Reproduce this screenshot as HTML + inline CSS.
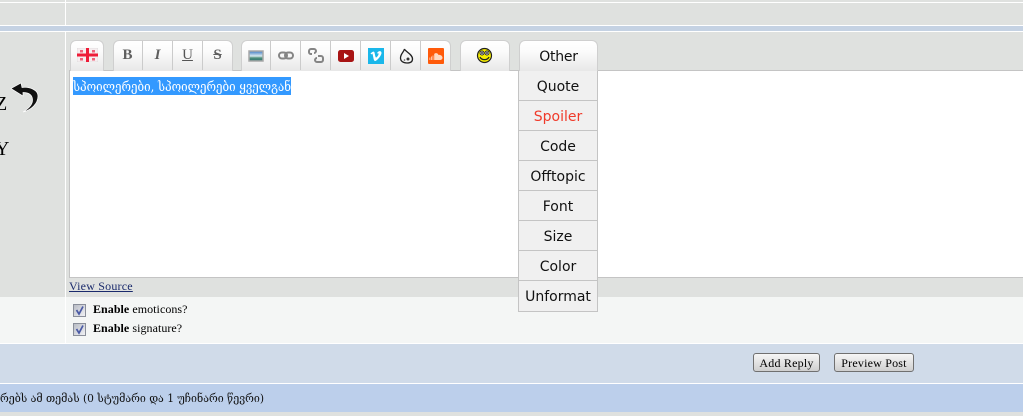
<!DOCTYPE html>
<html><head><meta charset="utf-8">
<style>
html,body{margin:0;padding:0;width:1023px;height:416px;overflow:hidden;background:#dfe1df}
.a{position:absolute}
body{font-family:"Liberation Serif","DejaVu Serif",serif;color:#000}
.g{position:absolute;top:40px;height:30px;border:1px solid #cfcfcf;border-bottom:0;border-radius:6px 6px 0 0;background:linear-gradient(#fff,#fbfbfb 35%,#e8e8e8);box-sizing:content-box}
.d{position:absolute;top:41px;width:1px;height:29px;background:#cbcbcb}
.t{position:absolute;top:47px;font:bold 15px "Liberation Serif",serif;color:#5f5f5f;text-align:center;width:29px}
.m{position:absolute;left:518px;width:78px;height:29px;background:#f0f0f0;border:1px solid #c4c4c4;border-top:0;box-sizing:content-box;text-align:center;font:14px/33px "DejaVu Sans","Liberation Sans",sans-serif;color:#111}
.cb{position:absolute;left:73px;width:11px;height:11px;border:1px solid #8a8f9a;background:linear-gradient(135deg,#b9bdc6,#f0f1f4)}
.btn{position:absolute;top:353px;height:17px;border:1px solid #707070;border-radius:3px;background:linear-gradient(#f6f6f6,#cfcfcf);font:12px/18px "Liberation Serif",serif;text-align:center;color:#000;letter-spacing:.2px}
</style></head><body>

<div class="a" style="left:0;top:2px;width:1023px;height:1px;background:#fff"></div>
<div class="a" style="left:0;top:25px;width:1023px;height:1px;background:#fff"></div>
<div class="a" style="left:0;top:26px;width:1023px;height:5px;background:#c5d2e3"></div>
<div class="a" style="left:0;top:31px;width:1023px;height:1px;background:#fff"></div>
<div class="a" style="left:65px;top:0;width:1px;height:25px;background:#fff"></div>
<div class="a" style="left:65px;top:32px;width:1px;height:265px;background:#fff"></div>

<!-- left cell -->
<div class="a" style="left:-5px;top:92px;font:20px/24px 'Liberation Serif',serif;color:#000">Z</div>
<div class="a" style="left:-5px;top:137px;font:20px/24px 'Liberation Serif',serif;color:#000">Y</div>
<svg class="a" style="left:10px;top:80px" width="30" height="34" viewBox="0 0 30 34">
<path d="M11 3 L1 8.500 L13 16 L13 12.500 C19 12.500 23 15 22.500 21 C22 25 18 29 13 32 C21 30 28 24 28 16 C28 10 20 6.500 12 7.500 Z" fill="#111" stroke="#fff" stroke-width=".7"/>
</svg>

<!-- editor -->
<div class="a" style="left:69px;top:70px;width:954px;height:208px;background:#fff;border-top:1px solid #c4c4c4;border-bottom:1px solid #c4c4c4;border-left:1px solid #c4c4c4;box-sizing:border-box"></div>

<!-- selection -->
<div class="a" style="left:73px;top:77px;width:218px;height:18px;background:#3399ff"></div>
<svg class="a" style="left:73px;top:77px" width="218" height="18">
<text x="0" y="14" textLength="218" lengthAdjust="spacingAndGlyphs" font-family="'DejaVu Serif','DejaVu Sans',serif" font-size="13" fill="#fff">სპოილერები, სპოილერები ყველგან</text>
</svg>

<!-- toolbar -->
<div class="g" style="left:70px;width:32px"></div>
<svg class="a" style="left:77px;top:48px" width="21" height="14" viewBox="0 0 21 14">
<rect width="21" height="14" fill="#f6eef0" stroke="#d4d4d4" stroke-width=".6"/>
<rect x="9" width="3" height="14" fill="#ee1c38"/><rect y="5.500" width="21" height="3" fill="#ee1c38"/>
<g fill="#f06078"><rect x="3" y="2" width="3" height="2.500"/><rect x="15" y="2" width="3" height="2.500"/><rect x="3" y="10" width="3" height="2.500"/><rect x="15" y="10" width="3" height="2.500"/></g>
</svg>

<div class="g" style="left:113px;width:118px"></div>
<div class="d" style="left:142px"></div><div class="d" style="left:172px"></div><div class="d" style="left:202px"></div>
<div class="t" style="left:113px">B</div>
<div class="t" style="left:143px;font-style:italic">I</div>
<div class="t" style="left:173px;text-decoration:underline;font-weight:normal;color:#555">U</div>
<div class="t" style="left:203px;text-decoration:line-through">S</div>

<div class="g" style="left:241px;width:208px"></div>
<div class="d" style="left:270px"></div><div class="d" style="left:300px"></div><div class="d" style="left:330px"></div><div class="d" style="left:360px"></div><div class="d" style="left:390px"></div><div class="d" style="left:420px"></div>

<svg class="a" style="left:248px;top:50px" width="16" height="12" viewBox="0 0 16 12">
<defs><linearGradient id="s" x1="0" y1="0" x2="0" y2="1"><stop offset="0" stop-color="#3b79c4"/><stop offset=".5" stop-color="#d7e8ee"/><stop offset=".7" stop-color="#4d8f7c"/><stop offset="1" stop-color="#2f6f70"/></linearGradient></defs>
<rect x="1" y="1" width="14" height="10" fill="url(#s)" stroke="#a8a8a8" stroke-width="1.500"/></svg>

<svg class="a" style="left:278px;top:51px" width="16" height="9" viewBox="0 0 16 9">
<rect x="1" y="1.500" width="8" height="6" rx="3" fill="none" stroke="#858585" stroke-width="2"/>
<rect x="7" y="1.500" width="8" height="6" rx="3" fill="none" stroke="#858585" stroke-width="2"/></svg>

<svg class="a" style="left:308px;top:48px" width="16" height="15" viewBox="0 0 16 15">
<path d="M4 6H2.500C1.500 6 1 5 1 4V3C1 2 1.800 1 3 1H6C7.200 1 8 2 8 3C8 4 7.200 5 6 5" fill="none" stroke="#858585" stroke-width="2"/>
<path d="M10 8H13C14.200 8 15 9 15 10V12C15 13 14.200 14 13 14H9C7.800 14 7 13 7 12C7 11 7.800 10 9 10" fill="none" stroke="#858585" stroke-width="2"/></svg>

<svg class="a" style="left:338px;top:50px" width="16" height="12" viewBox="0 0 16 12">
<rect width="16" height="12" rx="2.500" fill="#a81414"/><path d="M6 3L11 6L6 9Z" fill="#fff"/></svg>

<svg class="a" style="left:368px;top:48px" width="16" height="16" viewBox="0 0 16 16">
<rect width="16" height="16" fill="#1ab7ea"/>
<path d="M2.500 5.500C4.500 3.500 6 3 6.500 4.500C7 6.500 7.300 9 8 9.500C9 9.500 11 6.500 10.500 5.500C10 5 9.300 5.300 9 5.700C9.300 3 13.500 1.800 13.500 5C13.500 7.500 9 13 7 13C5.500 13 5.300 8 4.500 6C4.200 5.500 3.700 6 3.500 6.500Z" fill="#fff"/></svg>

<svg class="a" style="left:399px;top:48px" width="15" height="16" viewBox="0 0 15 16">
<path d="M5.500 1C6 3.500 13.500 6 13.500 11C13.500 13.500 11.500 15 8 15C4 15 1.500 13 1.500 10C1.500 6 4.500 4.500 5.500 1Z" fill="#f4f4f4" stroke="#222" stroke-width="1.300"/>
<circle cx="9" cy="11" r="1.500" fill="#333"/><circle cx="5.500" cy="12" r=".8" fill="#555"/></svg>

<svg class="a" style="left:428px;top:48px" width="16" height="16" viewBox="0 0 16 16">
<rect width="16" height="16" rx="1" fill="#ff5a0a"/>
<path d="M1.500 12V9.500H2.300V12ZM3 12V8.500H3.800V12ZM4.600 12V7.500H5.400V12ZM6.200 12V6C7.200 4.500 10 4.800 10.500 7C12.300 6.500 14.500 7.800 14.500 9.800C14.500 11 13.500 12 12.500 12Z" fill="#ffd9c2"/></svg>

<div class="g" style="left:460px;width:48px"></div>
<svg class="a" style="left:476px;top:47px" width="17" height="17" viewBox="0 0 17 17">
<circle cx="8.500" cy="8.500" r="7" fill="#f7ee00" stroke="#222" stroke-width="1.200"/>
<circle cx="6" cy="6" r="2" fill="#fff" stroke="#222" stroke-width=".9"/><circle cx="11" cy="6" r="2" fill="#fff" stroke="#222" stroke-width=".9"/>
<circle cx="6" cy="6" r=".9" fill="#000"/><circle cx="11" cy="6" r=".9" fill="#000"/>
<path d="M4 10C5.500 13.500 11.500 13.500 13 10" fill="none" stroke="#222" stroke-width="1.300"/></svg>

<div class="g" style="left:519px;width:77px;text-align:center;font:14px/33px 'DejaVu Sans','Liberation Sans',sans-serif;color:#111;letter-spacing:-.25px">Other</div>

<!-- view source -->
<div class="a" style="left:69px;top:279px;font:12px/15px 'Liberation Serif',serif;color:#1a2a6c;text-decoration:underline;letter-spacing:.2px">View Source</div>

<!-- options row -->
<div class="a" style="left:0;top:297px;width:1023px;height:46px;background:#f4f6f5"></div>
<div class="a" style="left:65px;top:297px;width:1px;height:46px;background:#fff"></div>
<div class="cb" style="top:304px"></div>
<div class="cb" style="top:323px"></div>
<svg class="a" style="left:73px;top:304px" width="13" height="32" viewBox="0 0 13 32">
<path d="M3.500 6L6 10L10 2.500" fill="none" stroke="#4a5aa5" stroke-width="1.700"/>
<path d="M3.500 25L6 29L10 21.500" fill="none" stroke="#4a5aa5" stroke-width="1.700"/></svg>
<div class="a" style="left:93px;top:302px;font:12px/15px 'Liberation Serif',serif;letter-spacing:.05px"><b>Enable</b> emoticons?</div>
<div class="a" style="left:93px;top:321px;font:12px/15px 'Liberation Serif',serif;letter-spacing:.05px"><b>Enable</b> signature?</div>

<!-- submit row -->
<div class="a" style="left:0;top:343px;width:1023px;height:1px;background:#fff"></div>
<div class="a" style="left:0;top:344px;width:1023px;height:39px;background:#d0dbe9"></div>
<div class="btn" style="left:753px;width:65px">Add Reply</div>
<div class="btn" style="left:834px;width:78px">Preview Post</div>

<!-- footer bar -->
<div class="a" style="left:0;top:383px;width:1023px;height:1px;background:#fff"></div>
<div class="a" style="left:0;top:384px;width:1023px;height:28px;background:#bccfeb"></div>
<svg class="a" style="left:0;top:390px" width="270" height="18">
<text x="0" y="12" textLength="264" lengthAdjust="spacingAndGlyphs" font-family="'DejaVu Serif','Liberation Serif',serif" font-size="11" fill="#111">რებს ამ თემას (0 სტუმარი და 1 უჩინარი წევრი)</text>
</svg>

<!-- dropdown -->
<div class="m" style="top:71px">Quote</div>
<div class="m" style="top:101px;color:#f03a2a">Spoiler</div>
<div class="m" style="top:131px">Code</div>
<div class="m" style="top:161px">Offtopic</div>
<div class="m" style="top:191px">Font</div>
<div class="m" style="top:221px">Size</div>
<div class="m" style="top:251px">Color</div>
<div class="m" style="top:281px;height:30px;line-height:33px">Unformat</div>

</body></html>
